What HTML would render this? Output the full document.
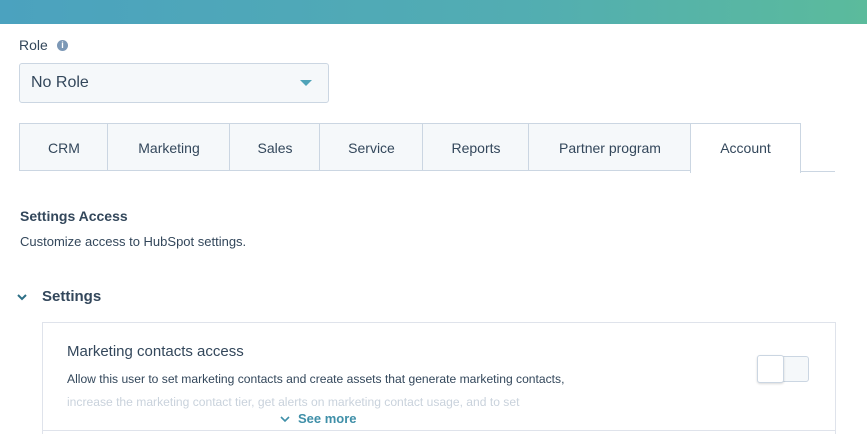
<!DOCTYPE html><html style="overflow:hidden;height:434px"><head><style>
body{margin:0;width:867px;height:434px;overflow:hidden;background:#fff;font-family:"Liberation Sans",sans-serif;color:#33475b;position:relative}
.top{position:absolute;left:0;top:0;width:867px;height:24px;background:linear-gradient(90deg,#4ba2bf,#52adb2 60%,#5bbb9c)}
.abs{position:absolute}
.tab{position:absolute;top:123px;height:48px;background:#f5f8fa;border:1px solid #cbd6e2;border-right:none;font-size:14px;line-height:48px;text-align:center;box-sizing:border-box}
</style></head><body>
<div class="top"></div>
<div class="abs" style="left:19px;top:37px;font-size:14px">Role</div>
<div class="abs" style="left:57px;top:40px;width:11px;height:11px;border-radius:50%;background:#7c98b6;color:#fff;font-size:9px;font-weight:bold;text-align:center;line-height:11px">i</div>
<div class="abs" style="left:19px;top:63px;width:310px;height:40px;box-sizing:border-box;background:#f5f8fa;border:1px solid #cbd6e2;border-radius:3px;font-size:16px;line-height:38px;padding-left:11px">No Role</div>
<div class="abs" style="left:300px;top:80px;width:0;height:0;border-left:6px solid transparent;border-right:6px solid transparent;border-top:6px solid #4fa3b8"></div>
<div class="tab" style="left:19px;width:89px">CRM</div>
<div class="tab" style="left:107px;width:123px">Marketing</div>
<div class="tab" style="left:229px;width:91px">Sales</div>
<div class="tab" style="left:319px;width:104px">Service</div>
<div class="tab" style="left:422px;width:107px">Reports</div>
<div class="tab" style="left:528px;width:163px">Partner program</div>
<div class="tab" style="left:690px;width:111px;background:#fff;border-right:1px solid #cbd6e2;border-bottom:none;height:50px">Account</div>
<div class="abs" style="left:800px;top:171px;width:35px;height:1px;background:#cbd6e2"></div>
<div class="abs" style="left:20px;top:208px;font-size:14px;font-weight:bold">Settings Access</div>
<div class="abs" style="left:20px;top:234px;font-size:13px">Customize access to HubSpot settings.</div>
<svg class="abs" style="left:16px;top:292px" width="12" height="10"><path d="M2 3l4 4 4-4" stroke="#2d6f86" stroke-width="2" fill="none"/></svg>
<div class="abs" style="left:42px;top:288px;font-size:15px;font-weight:bold">Settings</div>
<div class="abs" style="left:42px;top:322px;width:794px;height:112px;box-sizing:border-box;border:1px solid #dfe3eb;border-bottom:none"></div>
<div class="abs" style="left:42px;top:430px;width:794px;height:1px;background:#dfe3eb"></div>
<div class="abs" style="left:67px;top:343px;font-size:15px">Marketing contacts access</div>
<div class="abs" style="left:67px;top:372px;font-size:12.1px">Allow this user to set marketing contacts and create assets that generate marketing contacts,</div>
<div class="abs" style="left:67px;top:395px;font-size:12.1px;color:#c9d2dc">increase the marketing contact tier, get alerts on marketing contact usage, and to set</div>
<svg class="abs" style="left:279px;top:414px" width="12" height="10"><path d="M2 3l4 4 4-4" stroke="#3f8fa8" stroke-width="1.6" fill="none"/></svg>
<div class="abs" style="left:298px;top:411px;font-size:13px;font-weight:bold;color:#3f8fa8">See more</div>
<div class="abs" style="left:757px;top:356px;width:52px;height:26px;box-sizing:border-box;background:#f5f8fa;border:1px solid #cbd6e2;border-radius:3px"></div>
<div class="abs" style="left:757px;top:355px;width:27px;height:28px;box-sizing:border-box;background:#fff;border:1px solid #cbd6e2;border-radius:3px;box-shadow:0 1px 2px rgba(0,0,0,.15)"></div>
</body></html>
